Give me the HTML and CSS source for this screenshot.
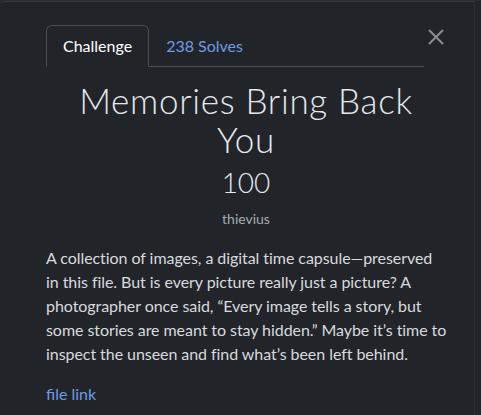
FILE: index.html
```html
<!DOCTYPE html>
<html>
<head>
<meta charset="utf-8">
<link rel="stylesheet" href="styles.css">
</head>
<body>
<div class="backdrop-strip"></div>
<div class="modal">
  <button class="close" aria-label="Close">
    <svg width="16" height="16" viewBox="0 0 16 16"><path d="M1 1 L15 15 M15 1 L1 15" stroke="#8b8e92" stroke-width="2" fill="none"/></svg>
  </button>
  <div class="body">
    <ul class="tabs">
      <li class="tab active">Challenge</li>
      <li class="tab">238 Solves</li>
    </ul>
    <h2 class="title">Memories Bring Back You</h2>
    <h3 class="value">100</h3>
    <div class="author">thievius</div>
    <p class="desc">A collection of images, a digital time capsule—preserved in this file. But is every picture really just a picture? A photographer once said, “Every image tells a story, but some stories are meant to stay hidden.” Maybe it’s time to inspect the unseen and find what’s been left behind.</p>
    <a class="file" href="#">file link</a>
  </div>
</div>
</body>
</html>
```
FILE: styles.css
```css
html, body {
  margin: 0;
  padding: 0;
  background: #212529;
  height: 100%;
  overflow: hidden;
  font-family: Lato, "Noto Sans", sans-serif;
}
.backdrop-strip {
  height: 1px;
  background: #2a2d31;
}
.modal {
  position: relative;
  width: 474px;
  height: 420px;
  background: #212529;
  border-top: 1px solid #34383d;
  border-right: 1px solid #2b2f34;
  border-top-left-radius: 4px;
}
.close {
  position: absolute;
  top: 27px;
  left: 428px;
  padding: 0;
  border: 0;
  background: none;
  width: 16px;
  height: 16px;
}
.close svg { display: block; }
.body {
  padding: 23px 0 0 46px;
  width: 400px;
}
.tabs {
  list-style: none;
  margin: 0 22px 0 0;
  padding: 0;
  display: flex;
  border-bottom: 1px solid #4a4f55;
}
.tab {
  font-size: 16px;
  line-height: 24px;
  padding: 8px 16px;
  border: 1px solid transparent;
  margin-bottom: -1px;
  color: #6f9be6;
  border-radius: 6px 6px 0 0;
}
.tab.active {
  color: #ffffff;
  border-color: #4a4f55 #4a4f55 #212529;
  background: #212529;
}
.title {
  margin: 14px 0 0;
  text-align: center;
  font-size: 35px;
  line-height: 38.5px;
  font-weight: 300;
  color: #e6e8eb;
  letter-spacing: 0.7px;
}
.value {
  margin: 8px 0 0;
  text-align: center;
  font-size: 28px;
  line-height: 33.6px;
  font-weight: 300;
  color: #e6e8eb;
}
.author {
  margin-top: 8px;
  text-align: center;
  font-size: 14px;
  line-height: 21px;
  color: #a6aaaf;
}
.desc {
  margin: 17px -1px 16px 0;
  font-size: 16px;
  line-height: 24px;
  color: #d8dadd;
  letter-spacing: -0.06px;
}
.file {
  font-size: 16px;
  line-height: 24px;
  color: #6f9be6;
  text-decoration: none;
}
```
